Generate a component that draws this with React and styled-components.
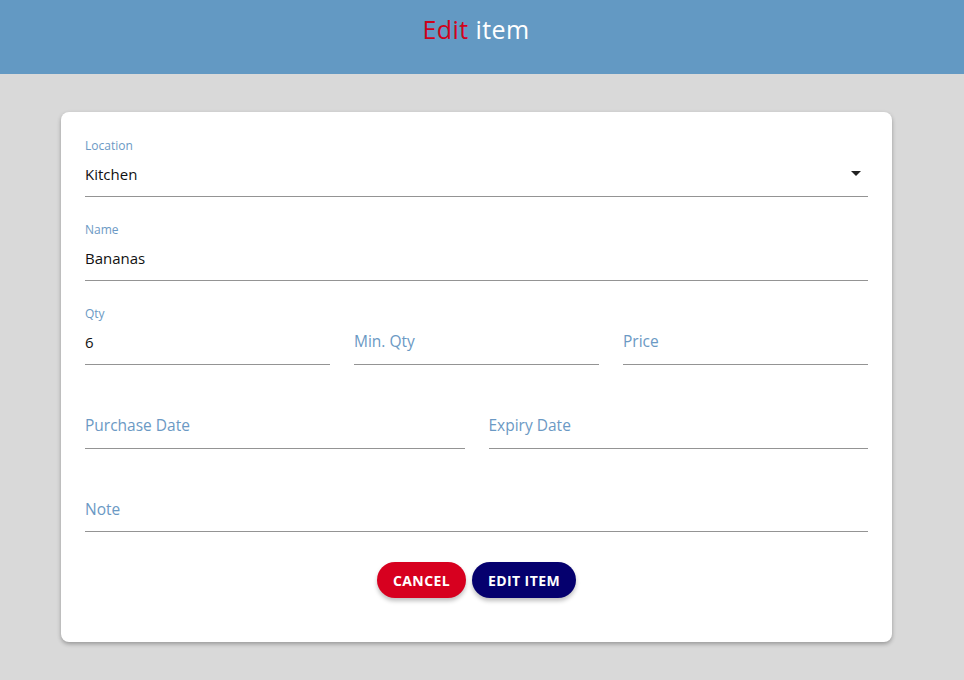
import styled, { createGlobalStyle } from "styled-components";

const GlobalStyle = createGlobalStyle`
  html, body {
    margin: 0;
    padding: 0;
    background: #d9d9d9;
    font-family: "Open Sans", "Noto Sans", sans-serif;
  }
  * { box-sizing: border-box; }
`;

const Header = styled.header`
  height: 74px;
  background: #6399c3;
  display: flex;
  justify-content: center;
  align-items: center;
  padding: 0 12px 16px 0;
  font-size: 25px;
  letter-spacing: 0.4px;
  color: #ffffff;`

const Red = styled.span`
  color: #d0021b;`

const Main = styled.main`
  padding: 38px 73px 38px 61px;`

const Card = styled.form`
  width: 831px;
  background: #ffffff;
  border-radius: 8px;
  box-shadow: 0 2px 4px rgba(0, 0, 0, 0.3);
  padding: 24px 24px 44px;
  display: flex;
  flex-direction: column;
  gap: 23px;`

const Row = styled.div`
  display: grid;
  grid-template-columns: repeat(${(p) => p.cols || 1}, 1fr);
  column-gap: 24px;`

const Field = styled.div`
  position: relative;
  height: ${(p) => p.h || 61}px;
  border-bottom: 1px solid #949494;`

const Label = styled.span`
  position: absolute;
  left: 0;
  top: ${(p) => (p.shrink ? "1px" : "26px")};
  font-size: ${(p) => (p.shrink ? "12px" : "15.5px")};
  color: #6b99c4;`

const Value = styled.span`
  position: absolute;
  left: 0;
  top: 28px;
  font-size: 15px;
  color: #111111;`

const Arrow = styled.span`
  position: absolute;
  right: 7px;
  top: 35px;
  width: 0;
  height: 0;
  border-left: 5px solid transparent;
  border-right: 5px solid transparent;
  border-top: 5px solid #222;`

const Actions = styled.div`
  display: flex;
  justify-content: center;
  gap: 6px;
  margin-top: 7px;`

const Button = styled.button`
  height: 36px;
  padding: 0 16px;
  border: none;
  border-radius: 18px;
  background: ${(p) => p.bg};
  color: #ffffff;
  font-family: "Open Sans", sans-serif;
  font-weight: 700;
  font-size: 14px;
  letter-spacing: 0.4px;
  text-transform: uppercase;
  box-shadow: 0 3px 4px rgba(0, 0, 0, 0.25);
  cursor: pointer;`

function TextField({ label, value, select, h }) {
  return (
    <Field h={h}>
      <Label shrink={value !== undefined}>{label}</Label>
      {value !== undefined && <Value>{value}</Value>}
      {select && <Arrow />}
    </Field>
  );
}

export default function App() {
  return (
    <>
      <GlobalStyle />
      <Header>
        <div>
          <Red>Edit</Red> item
        </div>
      </Header>
      <Main>
        <Card onSubmit={(e) => e.preventDefault()}>
          <TextField label="Location" value="Kitchen" select />
          <TextField label="Name" value="Bananas" />
          <Row cols={3}>
            <TextField label="Qty" value="6" />
            <TextField label="Min. Qty" />
            <TextField label="Price" />
          </Row>
          <Row cols={2}>
            <TextField label="Purchase Date" />
            <TextField label="Expiry Date" />
          </Row>
          <TextField label="Note" h={60} />
          <Actions>
            <Button type="button" bg="#d7001f">Cancel</Button>
            <Button type="submit" bg="#05006e">Edit item</Button>
          </Actions>
        </Card>
      </Main>
    </>
  );
}
